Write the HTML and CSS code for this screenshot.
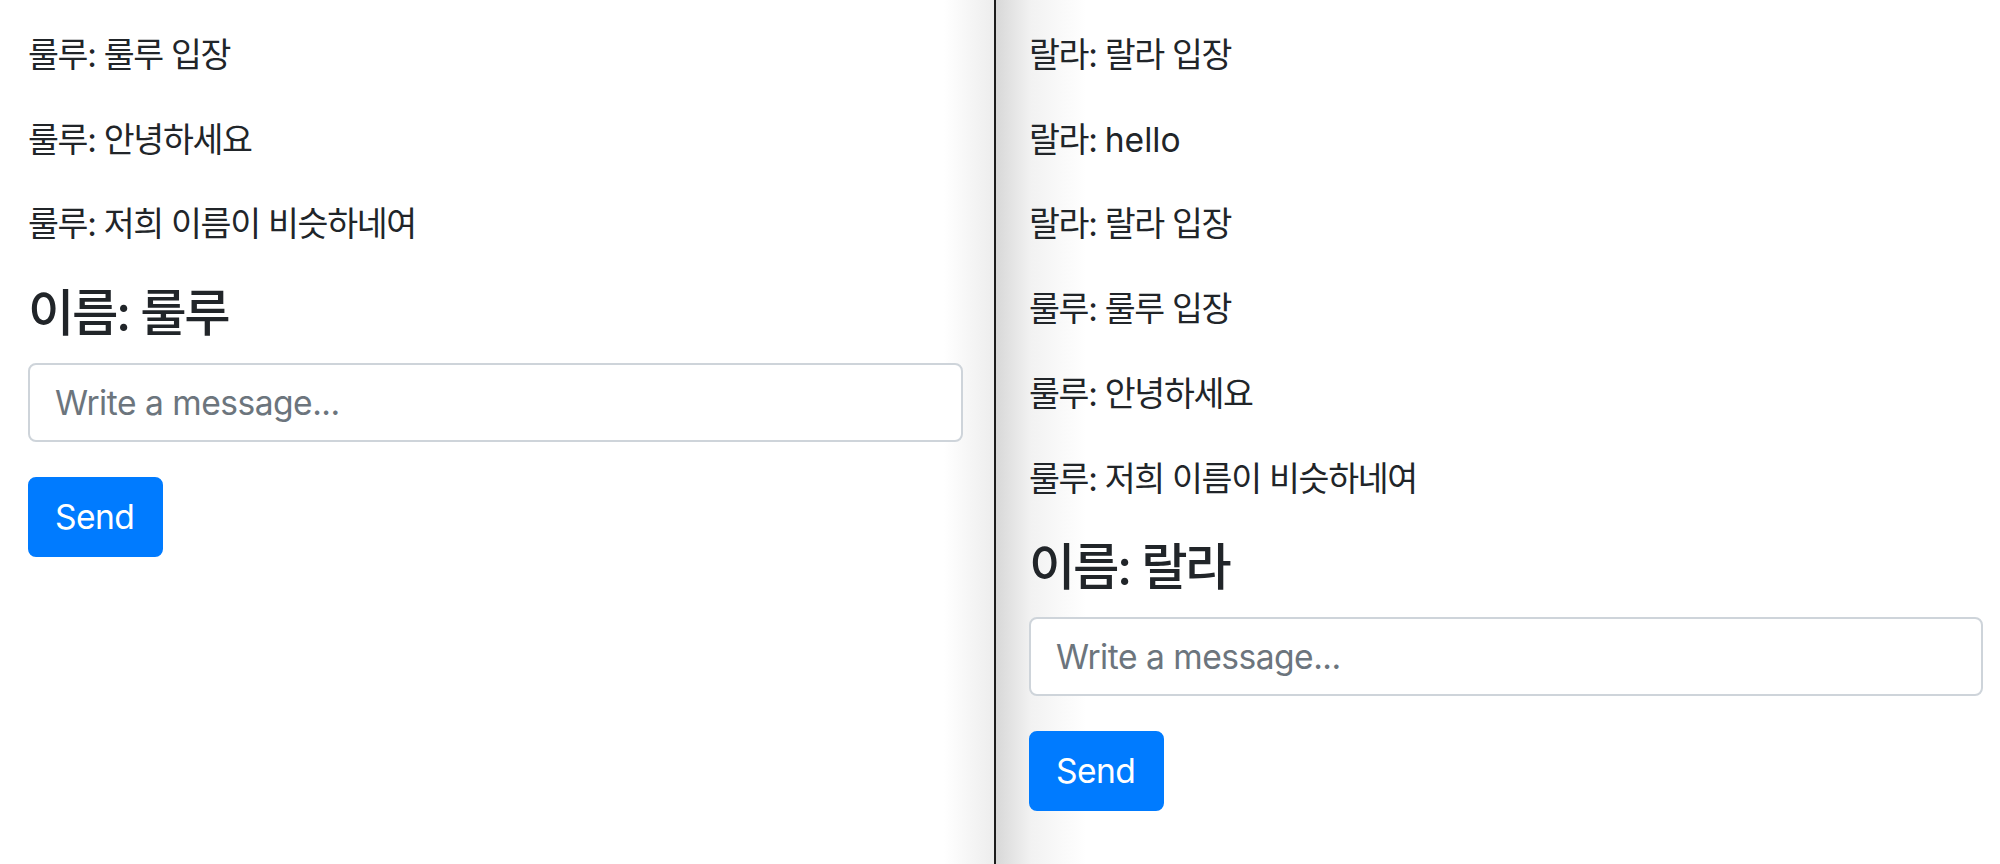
FILE: index.html
```html
<!DOCTYPE html>
<html lang="ko">
<head>
<meta charset="utf-8">
<title>Chat</title>
<link rel="stylesheet" href="styles.css">
</head>
<body>
<div class="screen">
  <section class="pane pane-left">
    <div class="messages">
      <p class="msg">룰루: 룰루 입장</p>
      <p class="msg">룰루: 안녕하세요</p>
      <p class="msg">룰루: 저희 이름이 비슷하네여</p>
    </div>
    <h4 class="name">이름: 룰루</h4>
    <form class="composer">
      <input class="field" type="text" placeholder="Write a message...">
      <button class="send" type="button">Send</button>
    </form>
  </section>
  <div class="divider"></div>
  <section class="pane pane-right">
    <div class="messages">
      <p class="msg">랄라: 랄라 입장</p>
      <p class="msg">랄라: <span class="latin">hello</span></p>
      <p class="msg">랄라: 랄라 입장</p>
      <p class="msg">룰루: 룰루 입장</p>
      <p class="msg">룰루: 안녕하세요</p>
      <p class="msg">룰루: 저희 이름이 비슷하네여</p>
    </div>
    <h4 class="name">이름: 랄라</h4>
    <form class="composer">
      <input class="field" type="text" placeholder="Write a message...">
      <button class="send" type="button">Send</button>
    </form>
  </section>
</div>
</body>
</html>
```

FILE: styles.css
```css
html, body {
  margin: 0;
  padding: 0;
  background: #fff;
}

body {
  font-family: Inter, "Noto Sans CJK KR", sans-serif;
  color: #212529;
}

.screen {
  display: flex;
  width: 2000px;
  height: 864px;
  overflow: hidden;
}

.pane {
  display: flex;
  flex-direction: column;
  box-sizing: border-box;
  padding-top: 30px;
}

.pane-left {
  width: 994px;
  padding-left: 28px;
  padding-right: 31px;
  background: linear-gradient(to right, #fff 0, #fff calc(100% - 50px), #ededed 100%);
}

.divider {
  width: 2px;
  flex: none;
  background: #1c1c1c;
}

.pane-right {
  flex: 1;
  padding-left: 33px;
  padding-right: 17px;
  background: linear-gradient(to right, #d8d8d8 0, #f2f2f2 35px, #fff 90px);
}

.messages {
  display: flex;
  flex-direction: column;
  gap: 34.3px;
}

.msg {
  margin: 0;
  font-size: 33.6px;
  line-height: 50.4px;
  font-weight: 400;
  letter-spacing: -1.3px;
  white-space: nowrap;
}

.latin {
  letter-spacing: 0;
}

.name {
  margin: 33px 0 20px;
  font-size: 50.4px;
  line-height: 60px;
  font-weight: 500;
  letter-spacing: -2.3px;
  white-space: nowrap;
}

.composer {
  display: flex;
  flex-direction: column;
  align-items: flex-start;
  gap: 35px;
  margin: 0;
}

.field {
  box-sizing: border-box;
  width: 100%;
  height: 79px;
  padding: 0 25px;
  border: 2px solid #ced4da;
  border-radius: 8px;
  background: #fff;
  font-family: Inter, "Noto Sans CJK KR", sans-serif;
  font-size: 33.6px;
  letter-spacing: -0.5px;
  color: #495057;
  outline: none;
}

.field::placeholder {
  color: #6c757d;
  opacity: 1;
}

.send {
  box-sizing: border-box;
  height: 80px;
  padding: 0 27px 0 25px;
  border: 2px solid #007bff;
  border-radius: 8px;
  background: #007bff;
  color: #fff;
  font-family: Inter, "Noto Sans CJK KR", sans-serif;
  font-size: 33.6px;
  font-weight: 400;
  letter-spacing: -0.6px;
  cursor: pointer;
}
```
